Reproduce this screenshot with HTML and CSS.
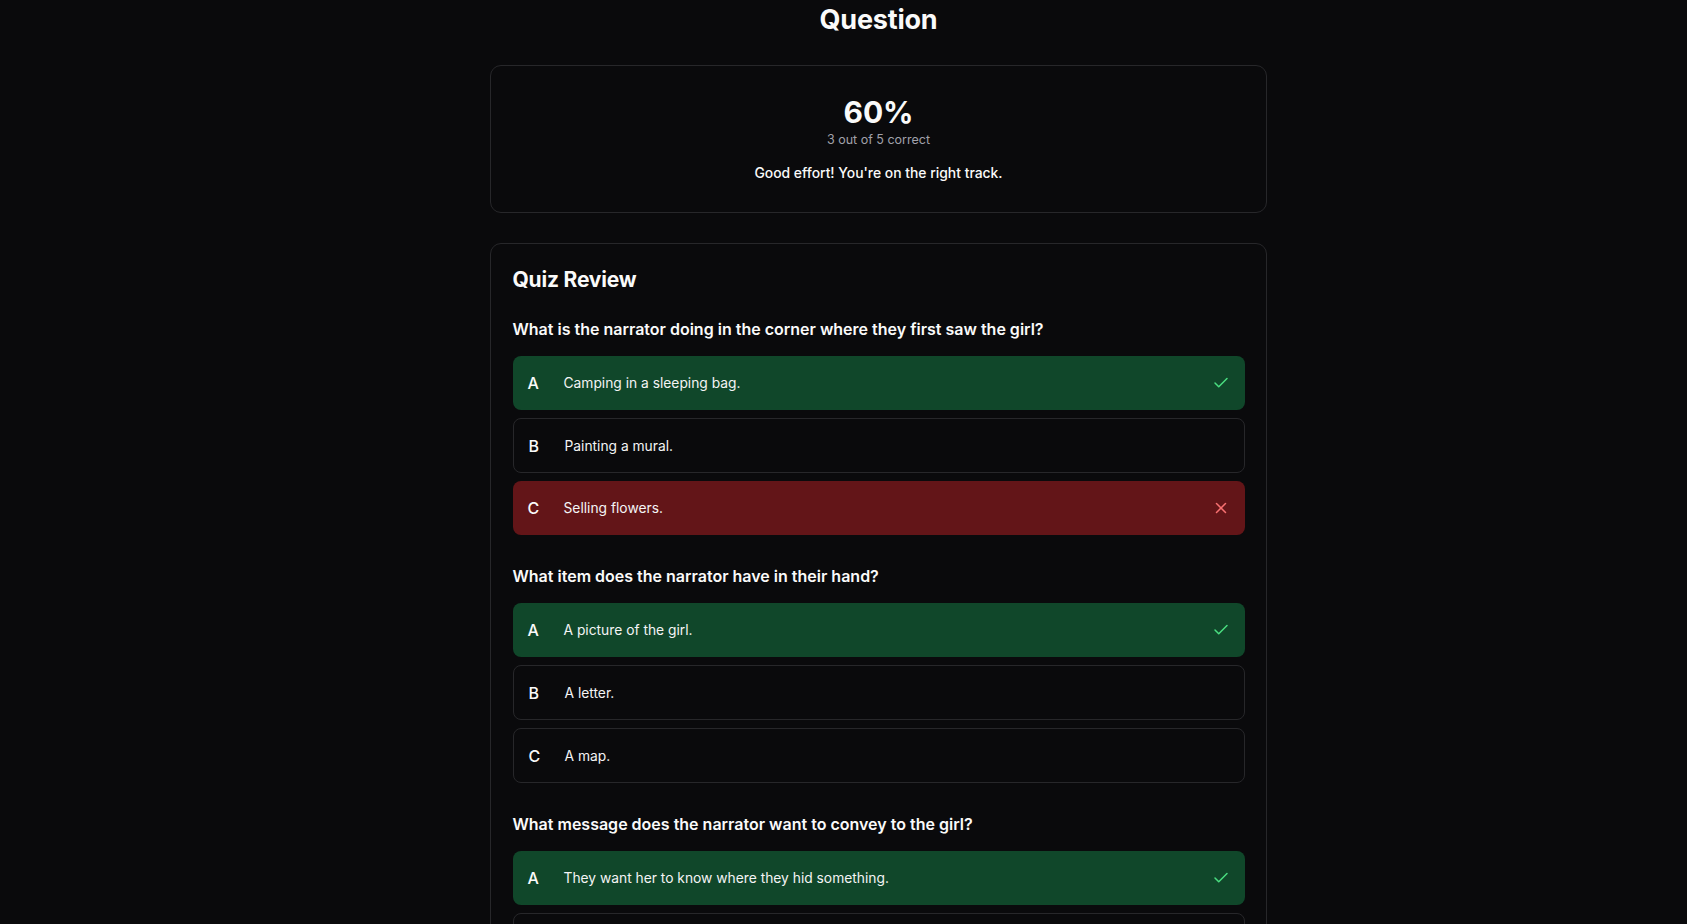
FILE: index.html
```html
<!DOCTYPE html>
<html lang="en">
<head>
<meta charset="utf-8">
<title>Question</title>
<link rel="stylesheet" href="styles.css">
</head>
<body>
<main class="page">
  <div class="container">
    <h1 class="page-title">Question</h1>

    <section class="card score-card">
      <div class="score">60%</div>
      <div class="score-sub">3 out of 5 correct</div>
      <p class="score-msg">Good effort! You're on the right track.</p>
    </section>

    <section class="card review-card">
      <h2 class="review-title">Quiz Review</h2>

      <div class="q-group">
        <h3 class="q-text">What is the narrator doing in the corner where they first saw the girl?</h3>
        <div class="options">
          <div class="option correct">
            <span class="opt-letter">A</span>
            <span class="opt-text">Camping in a sleeping bag.</span>
            <svg class="opt-icon check" viewBox="0 0 24 24" fill="none" stroke="currentColor" stroke-width="2" stroke-linecap="round" stroke-linejoin="round"><path d="M20 6 9 17l-5-5"/></svg>
          </div>
          <div class="option neutral">
            <span class="opt-letter">B</span>
            <span class="opt-text">Painting a mural.</span>
          </div>
          <div class="option wrong">
            <span class="opt-letter">C</span>
            <span class="opt-text">Selling flowers.</span>
            <svg class="opt-icon cross" viewBox="0 0 24 24" fill="none" stroke="currentColor" stroke-width="2" stroke-linecap="round" stroke-linejoin="round"><path d="M18 6 6 18"/><path d="m6 6 12 12"/></svg>
          </div>
        </div>
      </div>

      <div class="q-group">
        <h3 class="q-text">What item does the narrator have in their hand?</h3>
        <div class="options">
          <div class="option correct">
            <span class="opt-letter">A</span>
            <span class="opt-text">A picture of the girl.</span>
            <svg class="opt-icon check" viewBox="0 0 24 24" fill="none" stroke="currentColor" stroke-width="2" stroke-linecap="round" stroke-linejoin="round"><path d="M20 6 9 17l-5-5"/></svg>
          </div>
          <div class="option neutral">
            <span class="opt-letter">B</span>
            <span class="opt-text">A letter.</span>
          </div>
          <div class="option neutral">
            <span class="opt-letter">C</span>
            <span class="opt-text">A map.</span>
          </div>
        </div>
      </div>

      <div class="q-group">
        <h3 class="q-text">What message does the narrator want to convey to the girl?</h3>
        <div class="options">
          <div class="option correct">
            <span class="opt-letter">A</span>
            <span class="opt-text">They want her to know where they hid something.</span>
            <svg class="opt-icon check" viewBox="0 0 24 24" fill="none" stroke="currentColor" stroke-width="2" stroke-linecap="round" stroke-linejoin="round"><path d="M20 6 9 17l-5-5"/></svg>
          </div>
          <div class="option neutral">
            <span class="opt-letter">B</span>
            <span class="opt-text">They want her to leave the city.</span>
          </div>
        </div>
      </div>
    </section>
  </div>
</main>
</body>
</html>
```

FILE: styles.css
```css
* {
  box-sizing: border-box;
}

html, body {
  margin: 0;
  padding: 0;
  background: #0a0a0c;
  color: #fafafa;
  font-family: Inter, "Liberation Sans", sans-serif;
}

.page {
  padding-left: 70px;
}

.container {
  width: 777px;
  margin: 0 auto;
  padding-top: 4px;
  padding-bottom: 40px;
}

.page-title {
  margin: 0;
  font-size: 27px;
  line-height: 32px;
  font-weight: 700;
  text-align: center;
  letter-spacing: -0.2px;
}

.card {
  border: 1px solid #27272a;
  border-radius: 11px;
  background: #0a0a0c;
}

.score-card {
  margin-top: 29px;
  padding: 29px;
  text-align: center;
}

.score {
  font-size: 30px;
  line-height: 34px;
  font-weight: 700;
}

.score-sub {
  margin-top: 2px;
  font-size: 12.5px;
  line-height: 18px;
  color: #a1a1aa;
}

.score-msg {
  margin: 14px 0 0;
  font-size: 13.9px;
  line-height: 20px;
  font-weight: 500;
}

.review-card {
  margin-top: 30px;
  padding: 22px 21.5px;
}

.review-title {
  margin: 0;
  font-size: 21px;
  line-height: 28px;
  font-weight: 700;
  letter-spacing: -0.2px;
}

.q-group {
  margin-top: 29px;
}

.review-title + .q-group {
  margin-top: 23px;
}

.q-text {
  margin: 0 0 15px;
  font-size: 16px;
  line-height: 24px;
  font-weight: 600;
}

.options {
  display: flex;
  flex-direction: column;
  gap: 8px;
}

.option {
  display: flex;
  align-items: center;
  padding: 15px 15px;
  border-radius: 8px;
}

.option.correct {
  background: #10472a;
}

.option.wrong {
  background: #631518;
}

.option.neutral {
  border: 1px solid #27272a;
  padding: 14.5px 15px;
}

.opt-letter {
  width: 22px;
  flex: none;
  font-size: 16px;
  line-height: 24px;
  font-weight: 500;
}

.opt-text {
  margin-left: 14px;
  flex: 1;
  font-size: 13.8px;
  line-height: 24px;
  color: #f4f4f5;
}

.opt-icon {
  width: 18px;
  height: 18px;
  flex: none;
}

.opt-icon.check {
  color: #4ade80;
}

.opt-icon.cross {
  color: #f87171;
}
```
